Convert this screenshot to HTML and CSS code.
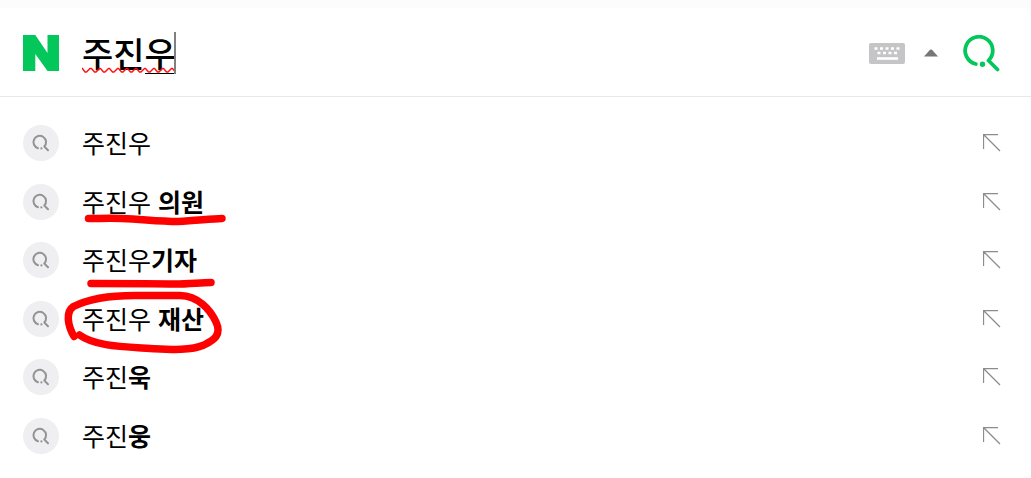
FILE: index.html
```html
<!DOCTYPE html>
<html lang="ko">
<head>
<meta charset="utf-8">
<title>주진우</title>
<link rel="stylesheet" href="styles.css">
</head>
<body>
<svg class="defs" aria-hidden="true">
  <symbol id="lens" viewBox="0 0 36 36">
    <path d="M15 23.200A6.300 6.300 0 1 1 21.300 21.500L25 25.200" fill="none" stroke="#949494" stroke-width="2" stroke-linecap="round" stroke-linejoin="round"/>
    <circle cx="18.400" cy="23.400" r="1.100" fill="#949494"/>
  </symbol>
  <symbol id="insert" viewBox="0 0 18 18">
    <path d="M.5 15V.5H15M.5 .5L17 17" fill="none" stroke="#8c8c8c" stroke-width="1.300"/>
  </symbol>
</svg>
<main class="panel">
  <form class="search">
    <a class="logo" href="#" aria-label="네이버">
      <svg width="36" height="36" viewBox="0 0 36 36"><path d="M0 0H12.300L24.500 18V0H36V36H24.500L12.300 19V36H0Z" fill="#03c75a"/></svg>
    </a>
    <div class="field">
      <input class="query" type="text" value="주진우" aria-label="검색어" spellcheck="false">
      <svg class="composing" width="95" height="44" viewBox="0 0 95 44" aria-hidden="true">
        <path d="M63 41.500H93" stroke="#000"/>
        <path d="M0 36L3 40H4.500L8 36.500H9.500L12.500 40H14L17.500 36.500H18.500L21.500 40H23L26.500 36.500H27.500L30.500 40H32L35.500 36.500H36.500L39.500 40H41L44.500 36.500H45.500L48.500 40H50L53.500 36.500H54.500L57.500 40H59L62.500 36.500H63.500L66.500 40H68L71.500 36.500H72.500L75.500 40H77L80.500 36.500H81.500L84.500 40H86L89.500 36.500H90.500L93 39.500" fill="none" stroke="#f11" stroke-width="1.400"/>
        <path d="M93 0V42" stroke="#808080" stroke-width="2"/>
      </svg>
    </div>
    <button class="icon-button" type="button" aria-label="입력기">
      <svg width="36" height="21" viewBox="0 0 36 21">
        <rect width="36" height="21" rx="2" fill="#c5c5c7"/>
        <path d="M5.500 5.500h3M11 5.500h3M16.500 5.500h3M22 5.500h3M27.500 5.500h3M8.500 10h3M14 10h3M19.500 10h3M25 10h3" stroke="#fff" stroke-width="2.600"/>
        <path d="M8 15.500h21" stroke="#fff" stroke-width="2.600"/>
      </svg>
    </button>
    <button class="icon-button toggle" type="button" aria-label="자동완성 닫기">
      <svg width="14" height="8" viewBox="0 0 14 8"><path d="M0 7.500L6 .8Q7 0 8 .8L14 7.500Z" fill="#777"/></svg>
    </button>
    <button class="icon-button" type="submit" aria-label="검색">
      <svg width="37" height="37" viewBox="0 0 37 37">
        <path d="M12.800 29A13.800 13.800 0 1 1 25.500 25.500L34.500 34.500" fill="none" stroke="#03c75a" stroke-width="3.800" stroke-linecap="round" stroke-linejoin="round"/>
        <circle cx="19.500" cy="29.200" r="2.700" fill="#03c75a"/>
      </svg>
    </button>
  </form>
  <div class="suggestions">
    <ul class="list">
      <li class="item"><svg class="badge"><use href="#lens"/></svg><a class="term" href="#">주진우</a><button class="icon-button" type="button" aria-label="검색어 입력"><svg class="arrow"><use href="#insert"/></svg></button></li>
      <li class="item"><svg class="badge"><use href="#lens"/></svg><a class="term" href="#">주진우 <b>의원</b></a><button class="icon-button" type="button" aria-label="검색어 입력"><svg class="arrow"><use href="#insert"/></svg></button></li>
      <li class="item"><svg class="badge"><use href="#lens"/></svg><a class="term" href="#">주진우<b>기자</b></a><button class="icon-button" type="button" aria-label="검색어 입력"><svg class="arrow"><use href="#insert"/></svg></button></li>
      <li class="item"><svg class="badge"><use href="#lens"/></svg><a class="term" href="#">주진우 <b>재산</b></a><button class="icon-button" type="button" aria-label="검색어 입력"><svg class="arrow"><use href="#insert"/></svg></button></li>
      <li class="item"><svg class="badge"><use href="#lens"/></svg><a class="term" href="#">주진<b>욱</b></a><button class="icon-button" type="button" aria-label="검색어 입력"><svg class="arrow"><use href="#insert"/></svg></button></li>
      <li class="item"><svg class="badge"><use href="#lens"/></svg><a class="term" href="#">주진<b>웅</b></a><button class="icon-button" type="button" aria-label="검색어 입력"><svg class="arrow"><use href="#insert"/></svg></button></li>
    </ul>
    <svg class="marks" width="240" height="270" viewBox="0 97 240 270" aria-hidden="true">
      <g fill="none" stroke="#f00" stroke-width="7.500" stroke-linecap="round" stroke-linejoin="round">
        <path d="M88.500 218.500C100 218.500 110 218 122 218.500C145 219.500 158 221.500 178 221.500C195 221 208 219 222 218.500"/>
        <path d="M91 283.500C125 283.500 155 283.500 175 284C190 284 200 282.500 211 282.500"/>
        <path d="M74 336.500C68 326 65 312 73.500 306.500C90 298 110 295.500 135 295.500H180C198 296 210 309 216 322C222 335 214 340 204 345C190 351 170 349.500 150 348.500C120 346.500 95 346 79.500 335"/>
      </g>
    </svg>
  </div>
</main>
</body>
</html>
```
FILE: styles.css
```css
* { box-sizing: border-box; }

body {
  margin: 0;
  padding-top: 8px;
  background: #fcfcfc;
  color: #000;
  font-family: "Noto Sans CJK KR", sans-serif;
}

.defs { position: absolute; width: 0; height: 0; }

.panel {
  min-height: calc(100vh - 8px);
  background: #fff;
  border-top-right-radius: 8px;
}

.search {
  display: flex;
  align-items: center;
  height: 89px;
  padding: 2px 31px 0 23px;
  border-bottom: 1px solid #e8e8e8;
}

.logo, .icon-button { display: flex; flex: none; }

.icon-button {
  padding: 0;
  border: 0;
  background: none;
  cursor: pointer;
}

.toggle { margin: 0 25px 0 19px; }

.field {
  position: relative;
  flex: 1;
  min-width: 0;
  margin: 0 23px;
}

.query {
  display: block;
  width: 100%;
  height: 42px;
  padding: 0;
  border: 0;
  outline: 0;
  background: none;
  font: 500 34px/42px "Noto Sans CJK KR", sans-serif;
}

.composing {
  position: absolute;
  top: 0;
  left: 0;
  pointer-events: none;
}

.suggestions { position: relative; }

.list {
  display: flex;
  flex-direction: column;
  justify-content: space-between;
  min-height: 357px;
  margin: 0;
  padding: 28px 30px 0 23px;
  list-style: none;
}

.item {
  display: flex;
  align-items: center;
  height: 36px;
}

.badge {
  flex: none;
  width: 36px;
  height: 36px;
  border-radius: 50%;
  background: #efeff1;
}

.term {
  flex: 1;
  margin: 0 23px;
  padding-bottom: 2px;
  color: inherit;
  font-size: 25px;
  line-height: 34px;
  text-decoration: none;
}

.arrow { width: 18px; height: 18px; }

.marks {
  position: absolute;
  top: 0;
  left: 0;
  pointer-events: none;
}
```
